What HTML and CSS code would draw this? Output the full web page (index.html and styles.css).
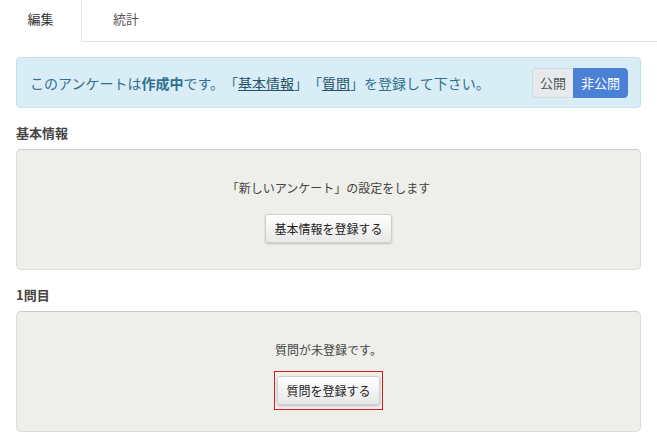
FILE: index.html
```html
<!DOCTYPE html>
<html lang="ja">
<head>
  <meta charset="UTF-8" />
  <title>アンケート編集</title>
  <link rel="stylesheet" href="styles.css">
</head>
<body>

  <div class="tabs">
    <div class="tab active">編集</div>
    <div class="tab">統計</div>
    <div class="tab-rest"></div>
  </div>

  <div class="content">
    <div class="alert">
      <div class="alert-text">
        このアンケートは<strong>作成中</strong>です。「<a href="#">基本情報</a>」「<a href="#">質問</a>」を登録して下さい。
      </div>
      <div class="toggle">
        <button class="toggle-btn">公開</button>
        <button class="toggle-btn on">非公開</button>
      </div>
    </div>

    <h4 class="section-title">基本情報</h4>
    <div class="panel">
      <p class="panel-text">「新しいアンケート」の設定をします</p>
      <button class="btn">基本情報を登録する</button>
    </div>

    <h4 class="section-title">1問目</h4>
    <div class="panel">
      <p class="panel-text">質問が未登録です。</p>
      <span class="marked"><button class="btn">質問を登録する</button></span>
    </div>
  </div>

</body>
</html>
```

FILE: styles.css
```css
body {
  margin: 0;
  font-family: "Noto Sans CJK JP", "Noto Sans", sans-serif;
  font-size: 13px;
  color: #333;
  background: #fff;
  text-spacing-trim: space-all;
}
.tabs {
  display: flex;
  height: 42px;
}
.tab {
  height: 41px;
  line-height: 38px;
  border-bottom: 1px solid #e2e2e2;
  color: #555;
}
.tab.active {
  width: 81px;
  text-align: center;
  border-bottom-color: #fff;
  border-right: 1px solid #e2e2e2;
  color: #333;
}
.tab:nth-child(2) {
  padding: 0 20px 0 31px;
}
.tab-rest {
  flex: 1;
  border-bottom: 1px solid #e2e2e2;
}
.content {
  padding: 15px 16px 0;
}
.alert {
  display: flex;
  align-items: center;
  justify-content: space-between;
  height: 49px;
  padding: 0 12px 0 13px;
  background: #d9edf7;
  border: 1px solid #c4e3f1;
  border-radius: 4px;
  color: #31708f;
  font-size: 14px;
}
.alert-text strong {
  font-weight: bold;
}
.alert-text a {
  color: #245269;
  text-decoration: underline;
}
.toggle {
  display: flex;
}
.toggle-btn {
  height: 30px;
  padding: 0 7px;
  border: 1px solid #d3dade;
  background: #e6eaec;
  color: #555;
  font-family: inherit;
  font-size: 13px;
}
.toggle-btn:first-child {
  border-radius: 4px 0 0 4px;
  border-right: none;
}
.toggle-btn.on {
  background: #4a80d6;
  border-color: #4a80d6;
  color: #fff;
  border-radius: 0 4px 4px 0;
}
.section-title {
  margin: 16px 0 7px;
  font-size: 13px;
  line-height: 18px;
  font-weight: bold;
  color: #444;
}
.panel {
  height: 91px;
  padding: 28px 0 0;
  background: #eeeeea;
  border: 1px solid #dddcd8;
  border-top-color: #cccbc7;
  border-radius: 5px;
  text-align: center;
}
.panel-text {
  margin: 0 0 16px;
  line-height: 20px;
  font-size: 12px;
  color: #444;
}
.btn {
  height: 29px;
  padding: 0 8px;
  border: 1px solid #cfcfcf;
  border-radius: 3px;
  background: linear-gradient(#ffffff, #e8e8e8);
  box-shadow: 0 1px 2px rgba(0, 0, 0, 0.2);
  font-family: inherit;
  font-size: 12px;
  color: #222;
}
.marked {
  display: inline-block;
  margin: -5px -3px;
  padding: 4px 2px;
  border: 1px solid #d21d1d;
}
.marked .btn {
  display: block;
}
```
